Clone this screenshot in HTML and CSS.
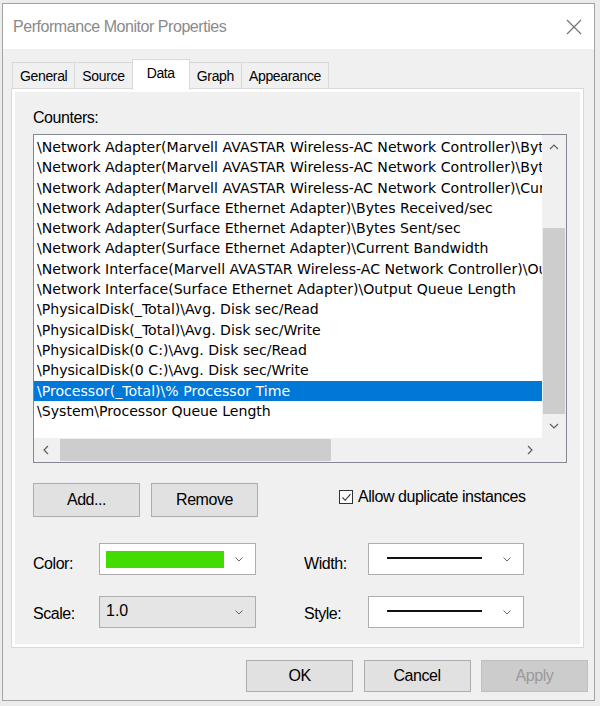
FILE: index.html
```html
<!DOCTYPE html>
<html>
<head>
<meta charset="utf-8">
<link rel="stylesheet" href="styles.css">
</head>
<body>
<div class="window">
  <div class="titlebar">
    <span class="title">Performance Monitor Properties</span>
    <svg class="close" width="16" height="16" viewBox="0 0 16 16"><path d="M1 1 L15 15 M15 1 L1 15" stroke="#707070" stroke-width="1.1" fill="none"/></svg>
  </div>
  <div class="content">
    <div class="tabs">
      <div class="tab">General</div>
      <div class="tab">Source</div>
      <div class="tab tab-selected">Data</div>
      <div class="tab">Graph</div>
      <div class="tab">Appearance</div>
    </div>
    <div class="panel">
      <div class="page">
        <div class="label counters-label">Counters:</div>
        <div class="listbox">
          <div class="list-main">
            <div class="items">
              <div class="item">\Network Adapter(Marvell AVASTAR Wireless-AC Network Controller)\Bytes Received/sec</div>
              <div class="item">\Network Adapter(Marvell AVASTAR Wireless-AC Network Controller)\Bytes Sent/sec</div>
              <div class="item">\Network Adapter(Marvell AVASTAR Wireless-AC Network Controller)\Current Bandwidth</div>
              <div class="item">\Network Adapter(Surface Ethernet Adapter)\Bytes Received/sec</div>
              <div class="item">\Network Adapter(Surface Ethernet Adapter)\Bytes Sent/sec</div>
              <div class="item">\Network Adapter(Surface Ethernet Adapter)\Current Bandwidth</div>
              <div class="item">\Network Interface(Marvell AVASTAR Wireless-AC Network Controller)\Output Queue Length</div>
              <div class="item">\Network Interface(Surface Ethernet Adapter)\Output Queue Length</div>
              <div class="item">\PhysicalDisk(_Total)\Avg. Disk sec/Read</div>
              <div class="item">\PhysicalDisk(_Total)\Avg. Disk sec/Write</div>
              <div class="item">\PhysicalDisk(0 C:)\Avg. Disk sec/Read</div>
              <div class="item">\PhysicalDisk(0 C:)\Avg. Disk sec/Write</div>
              <div class="item item-selected">\Processor(_Total)\% Processor Time</div>
              <div class="item">\System\Processor Queue Length</div>
            </div>
            <div class="vscroll">
              <div class="sb-btn"><svg width="10" height="6" viewBox="0 0 10 6"><path d="M1 5 L5 1 L9 5" stroke="#606060" stroke-width="1.2" fill="none"/></svg></div>
              <div class="vtrack"><div class="vthumb"></div></div>
              <div class="sb-btn"><svg width="10" height="6" viewBox="0 0 10 6"><path d="M1 1 L5 5 L9 1" stroke="#606060" stroke-width="1.2" fill="none"/></svg></div>
            </div>
          </div>
          <div class="hscroll-row">
            <div class="hscroll">
              <div class="sb-btn"><svg width="6" height="10" viewBox="0 0 6 10"><path d="M5 1 L1 5 L5 9" stroke="#606060" stroke-width="1.2" fill="none"/></svg></div>
              <div class="htrack"><div class="hthumb"></div></div>
              <div class="sb-btn"><svg width="6" height="10" viewBox="0 0 6 10"><path d="M1 1 L5 5 L1 9" stroke="#606060" stroke-width="1.2" fill="none"/></svg></div>
            </div>
            <div class="corner"></div>
          </div>
        </div>
        <div class="actions">
          <div class="button">Add...</div>
          <div class="button button-remove">Remove</div>
          <div class="checkgroup">
            <span class="checkbox"><svg width="11" height="11" viewBox="0 0 11 11"><path d="M1.5 5.5 L4.2 8.3 L9.5 2.2" stroke="#333" stroke-width="1.1" fill="none"/></svg></span>
            <span class="label">Allow duplicate instances</span>
          </div>
        </div>
        <div class="props">
          <div class="label prop-label">Color:</div>
          <div class="dropdown">
            <span class="swatch"></span>
            <svg class="chev" width="8" height="5" viewBox="0 0 8 5"><path d="M0.5 0.5 L4 4 L7.5 0.5" stroke="#666" stroke-width="1" fill="none"/></svg>
          </div>
          <div></div>
          <div class="label prop-label">Width:</div>
          <div class="dropdown">
            <span class="linesample linesample-width"></span>
            <svg class="chev" width="8" height="5" viewBox="0 0 8 5"><path d="M0.5 0.5 L4 4 L7.5 0.5" stroke="#666" stroke-width="1" fill="none"/></svg>
          </div>
          <div class="label prop-label prop-label-low">Scale:</div>
          <div class="dropdown dropdown-gray">
            <span class="dd-text">1.0</span>
            <svg class="chev" width="8" height="5" viewBox="0 0 8 5"><path d="M0.5 0.5 L4 4 L7.5 0.5" stroke="#666" stroke-width="1" fill="none"/></svg>
          </div>
          <div></div>
          <div class="label prop-label prop-label-low">Style:</div>
          <div class="dropdown">
            <span class="linesample linesample-style"></span>
            <svg class="chev" width="8" height="5" viewBox="0 0 8 5"><path d="M0.5 0.5 L4 4 L7.5 0.5" stroke="#666" stroke-width="1" fill="none"/></svg>
          </div>
        </div>
      </div>
    </div>
    <div class="footer">
      <div class="button button-footer">OK</div>
      <div class="button button-footer">Cancel</div>
      <div class="button button-footer button-disabled">Apply</div>
    </div>
  </div>
</div>
</body>
</html>
```
FILE: styles.css
```css
* { box-sizing: border-box; }
html, body { margin: 0; padding: 0; }
body {
  width: 600px;
  height: 706px;
  overflow: hidden;
  background: #ececec;
  font-family: "Liberation Sans", Arial, sans-serif;
  color: #000;
}
.window {
  margin: 3px 0 0 2px;
  width: 593px;
  height: 698px;
  border: 1px solid #a3a3a3;
  background: #f0f0f0;
  display: flex;
  flex-direction: column;
}
.titlebar {
  height: 45px;
  background: #fff;
  display: flex;
  align-items: center;
  justify-content: space-between;
  padding: 0 12px 0 10px;
  flex-shrink: 0;
}
.title {
  font-size: 16px;
  letter-spacing: -0.45px;
  color: #8a8a8a;
}
.content {
  flex: 1;
  display: flex;
  flex-direction: column;
  padding: 10px 6px 0 8px;
}
.tabs {
  display: flex;
  align-items: flex-end;
  height: 31px;
  margin-left: 1px;
  margin-bottom: -2px;
  position: relative;
  z-index: 1;
}
.tab {
  height: 26px;
  margin-bottom: 2px;
  margin-right: -1px;
  padding: 0 7px;
  border: 1px solid #d9d9d9;
  border-bottom: none;
  background: #f0f0f0;
  display: flex;
  align-items: center;
  justify-content: center;
  font-size: 14px;
  letter-spacing: -0.35px;
}
.tab-selected {
  height: 31px;
  margin-bottom: 0;
  padding: 0 14px 4px;
  background: #fff;
  border-color: #d9d9d9;
}
.panel {
  width: 573px;
  height: 560px;
  border: 1px solid #d9d9d9;
  background: #fff;
  padding: 3px;
  display: flex;
}
.page {
  flex: 1;
  background: #f0f0f0;
  padding: 16px 0 0 18px;
  display: flex;
  flex-direction: column;
}
.label {
  font-size: 16px;
  letter-spacing: -0.45px;
  line-height: 20px;
}
.listbox {
  margin-top: 6px;
  width: 534px;
  height: 329px;
  border: 1px solid #828790;
  background: #fff;
  display: flex;
  flex-direction: column;
}
.list-main {
  height: 303px;
  display: flex;
}
.items {
  width: 508px;
  overflow: hidden;
  padding-top: 2px;
  font-family: "DejaVu Sans", Verdana, sans-serif;
  font-size: 14.1px;
}
.item {
  height: 20.3px;
  line-height: 20.3px;
  padding-left: 3px;
  white-space: nowrap;
  overflow: hidden;
}
.item-selected {
  background: #0078d7;
  color: #fff;
}
.vscroll {
  width: 24px;
  background: #f0f0f0;
  display: flex;
  flex-direction: column;
}
.sb-btn {
  width: 24px;
  height: 24px;
  display: flex;
  align-items: center;
  justify-content: center;
  flex-shrink: 0;
}
.vtrack {
  flex: 1;
  padding-top: 69px;
  display: flex;
  flex-direction: column;
}
.vthumb {
  flex: 1;
  margin: 0 1px;
  background: #cdcdcd;
}
.hscroll-row {
  height: 24px;
  display: flex;
}
.hscroll {
  width: 508px;
  background: #f0f0f0;
  display: flex;
}
.htrack {
  flex: 1;
  display: flex;
  padding: 1px 0 1px 2px;
}
.hthumb {
  width: 271px;
  background: #cdcdcd;
}
.corner {
  width: 24px;
  background: #f0f0f0;
}
.actions {
  margin-top: 20px;
  height: 34px;
  display: flex;
  align-items: center;
}
.button {
  width: 107px;
  height: 34px;
  border: 1px solid #adadad;
  background: #e1e1e1;
  display: flex;
  align-items: center;
  justify-content: center;
  font-size: 16px;
  letter-spacing: -0.45px;
}
.button-remove { margin-left: 11px; }
.checkgroup {
  margin-left: 81px;
  display: flex;
  align-items: center;
  margin-top: -6px;
}
.checkbox {
  width: 14px;
  height: 14px;
  border: 1px solid #333;
  background: #fff;
  display: flex;
  align-items: center;
  justify-content: center;
  margin-right: 5px;
}
.props {
  margin-top: 26px;
  display: grid;
  grid-template-columns: 66px 157px 48px 64px 156px;
  grid-template-rows: 32px 32px;
  row-gap: 21px;
}
.prop-label {
  align-self: end;
  margin-bottom: 1px;
}
.prop-label-low { margin-bottom: 4px; }
.dropdown {
  border: 1px solid #adadad;
  background: #fff;
  display: flex;
  align-items: center;
  padding-right: 12px;
}
.dropdown-gray { background: #e5e5e5; }
.chev { margin-left: auto; }
.swatch {
  margin-left: 6px;
  width: 118px;
  height: 17px;
  background: #42dc00;
}
.dd-text {
  margin-left: 6px;
  font-size: 16px;
  margin-top: -3px;
}
.linesample {
  margin-left: 18px;
  width: 95px;
  background: #111;
}
.linesample-width { height: 2px; margin-top: -2px; }
.linesample-style { height: 2px; margin-top: -2px; }
.footer {
  margin-top: 12px;
  display: flex;
  justify-content: flex-end;
  gap: 10.5px;
}
.button-footer { height: 32px; }
.button-disabled {
  background: #cccccc;
  border-color: #bfbfbf;
  color: #9a9a9a;
}
```
